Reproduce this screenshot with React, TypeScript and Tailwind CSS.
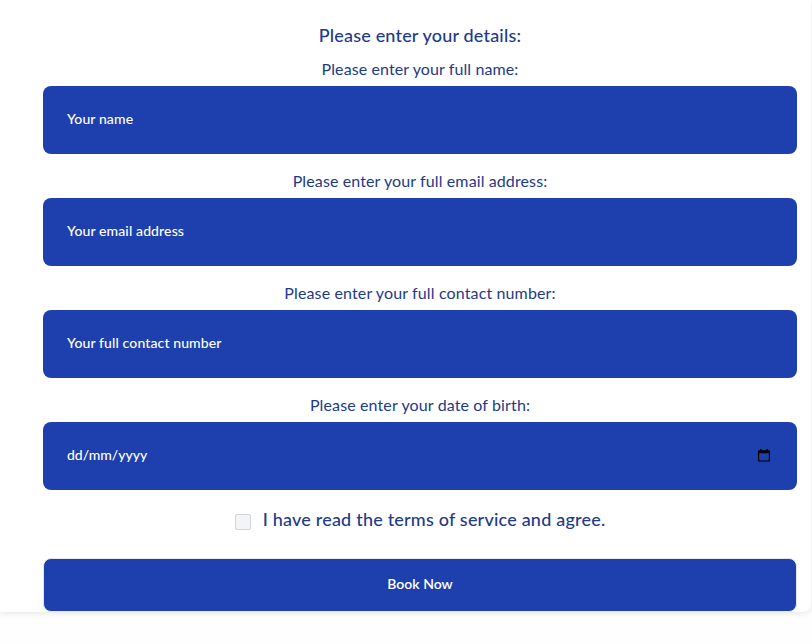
import { useState } from 'react';

interface FieldProps {
  label: string;
  placeholder: string;
  labelClass: string;
  textClass: string;
  date?: boolean;
}

const fields: FieldProps[] = [
  { label: 'Please enter your full name:', placeholder: 'Your name', labelClass: 'tracking-[0.1px]', textClass: 'tracking-[0.1px]' },
  { label: 'Please enter your full email address:', placeholder: 'Your email address', labelClass: 'tracking-[0.11px]', textClass: 'tracking-[0.12px]' },
  { label: 'Please enter your full contact number:', placeholder: 'Your full contact number', labelClass: 'tracking-[0.13px]', textClass: 'tracking-[0.12px]' },
  { label: 'Please enter your date of birth:', placeholder: 'dd/mm/yyyy', labelClass: 'tracking-[0.13px]', textClass: 'tracking-[0px]', date: true },
];

function CalendarIcon() {
  return (
    <svg className="mb-0.5 h-[13px] w-3 text-black" viewBox="0 0 12 13" fill="none">
      <path d="M2 0h1.4v1.2h5.2V0H10v1.2h.8c.7 0 1.2.5 1.2 1.2v9c0 .7-.5 1.2-1.2 1.2H1.2C.5 12.600 0 12.100 0 11.400v-9c0-.7.5-1.200 1.200-1.200H2V0Zm-.8 4.200v7.200h9.600V4.200H1.200Z" fill="currentColor" />
    </svg>
  );
}

function Field({ label, placeholder, labelClass, textClass, date }: FieldProps) {
  return (
    <div className="mb-4">
      <p className={`-mt-px mb-[5px] text-center text-base text-[#1e3a8a] ${labelClass}`}>{label}</p>
      <div className="flex h-[68px] items-center justify-between rounded-lg bg-[#1e40af] pr-[27px] pl-6 text-white">
        <span className={`pb-0.5 text-sm font-medium ${textClass}`}>{placeholder}</span>
        {date && <CalendarIcon />}
      </div>
    </div>
  );
}

export default function App() {
  const [agreed, setAgreed] = useState(false);

  return (
    <div className="h-[644px] overflow-hidden bg-[#fefefe] font-['Lato',sans-serif]">
      <div className="h-[612px] w-[811px] rounded-br-lg bg-white pt-[21px] pr-[14px] pl-[43px] shadow-[0_1px_6px_rgba(0,0,0,0.11)]">
        <h2 className="mb-[9px] text-center text-lg font-medium tracking-[0.18px] text-[#1e3a8a]">Please enter your details:</h2>
        {fields.map((field) => (
          <Field key={field.label} {...field} />
        ))}
        <label className="-mt-px flex h-[29px] justify-center text-[#1e3a8a]">
          <input
            type="checkbox"
            checked={agreed}
            onChange={(e) => setAgreed(e.target.checked)}
            className="mt-[9px] mr-3 h-4 w-4 appearance-none rounded-xs border border-gray-300 bg-gray-100 checked:bg-blue-800"
          />
          <span className="text-lg font-medium tracking-[0.2px]">I have read the terms of service and agree.</span>
        </label>
        <button className="mt-6 h-[54px] w-full rounded-lg border border-gray-200 bg-[#1e40af] pb-0.5 text-sm font-semibold text-white">
          Book Now
        </button>
      </div>
    </div>
  );
}
